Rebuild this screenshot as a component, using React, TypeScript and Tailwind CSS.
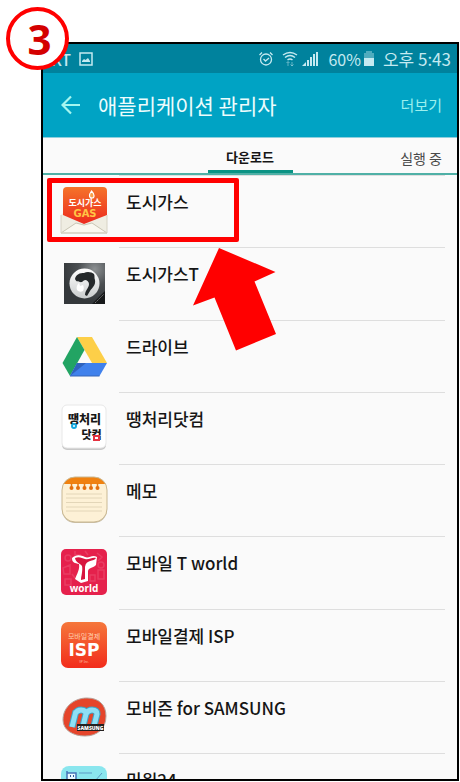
import type { ReactNode } from 'react';

const KR = 'Noto Sans CJK KR, sans-serif';

function GasIcon() {
  return (
    <svg viewBox="0 0 48 48" className="size-12" aria-hidden="true">
      <defs>
        <linearGradient id="gas" x1="0" y1="0" x2="0" y2="1">
          <stop offset="0" stopColor="#f5732a" />
          <stop offset="1" stopColor="#ec2a1e" />
        </linearGradient>
      </defs>
      <path d="M1 28l2-2h42l2 2v18H1z" fill="#efede2" />
      <path d="M1 46l15-10 8 2 8-2 15 10z" fill="#faf8f0" stroke="#c9c5b4" strokeWidth="1" />
      <path d="M3 4q0-4 4-4h36q4 0 4 4v24L24 37 3 28z" fill="url(#gas)" />
      <path d="M1 28v18h46V28" fill="none" stroke="#d6d2c4" strokeWidth="1" />
      <path d="M31.500 4c3 3 3.500 7 .5 7s-3.500-3-.5-7z" fill="#f8a04a" stroke="#fff" strokeWidth="1.200" />
      <text x="25" y="19" textAnchor="middle" fontFamily={KR} fontSize="9" fontWeight="700" fill="#fff">도시가스</text>
      <text x="25" y="30" textAnchor="middle" fontFamily="DejaVu Sans, sans-serif" fontSize="10" fontWeight="700" fill="#ffc545">GAS</text>
    </svg>
  );
}

function HorseIcon() {
  return (
    <svg viewBox="0 0 48 48" className="size-12" aria-hidden="true">
      <defs>
        <radialGradient id="slate" cx=".75" cy=".15" r=".8">
          <stop offset="0" stopColor="#8d9193" />
          <stop offset=".5" stopColor="#4b4f52" />
          <stop offset="1" stopColor="#34383b" />
        </radialGradient>
        <linearGradient id="silver" x1="0" y1="0" x2="0" y2="1">
          <stop offset="0" stopColor="#fff" />
          <stop offset="1" stopColor="#c9cccd" />
        </linearGradient>
      </defs>
      <rect x="4" y="4" width="41" height="41" fill="url(#slate)" />
      <path d="M45 32v13H32z" fill="#17191a" />
      <path d="M35 44l9-9" stroke="#777" strokeWidth="1" strokeDasharray="2 1" />
      <circle cx="24.500" cy="24.500" r="15" fill="url(#silver)" />
      <path d="M15 20c1-5 5-6 9-6 3-2 8-1 10 1 1 2 0 4 1 6 1 5-3 8-5 11l-3 5-2-1c0-5 4-7 4-11 0-2-2-4-4-4l-2 1c-1 2-4 1-5 0-1 1-2 0-3-2z" fill="#25292b" />
      <path d="M17 31c-1-3 0-5 2-7l1 3 3-1c1 2 1 4 0 6-2 1-4 1-6-1z" fill="#fff" />
    </svg>
  );
}

function DriveIcon() {
  return (
    <svg viewBox="0 0 48 48" className="size-12" aria-hidden="true">
      <path d="M17 5h15l15 26H32z" fill="#fdcf48" />
      <path d="M17 5l7.500 13L10 44 2.500 31z" fill="#22a463" />
      <path d="M17 31h30l-7.500 13H10z" fill="#4081ec" />
      <path d="M17 31h9L10 44z" fill="#2f63bd" />
      <path d="M10 44h29.500" stroke="#3565b8" strokeWidth="1" />
    </svg>
  );
}

function TtaengIcon() {
  return (
    <svg viewBox="0 0 48 48" className="size-12" aria-hidden="true">
      <rect x="2" y="2" width="44" height="44" rx="5" fill="#c8c8c8" />
      <rect x="2" y="1" width="44" height="43" rx="5" fill="#fff" stroke="#e8e8e8" strokeWidth="1" />
      <text x="24.500" y="20" textAnchor="middle" fontFamily={KR} fontSize="12" fontWeight="900" fill="#171717">땡처리</text>
      <text x="31.500" y="35" textAnchor="middle" fontFamily={KR} fontSize="11" fontWeight="900" fill="#171717">닷컴</text>
      <circle cx="14" cy="22" r="2" fill="#fff" stroke="#13a7df" strokeWidth="2" />
      <rect x="34" y="32" width="5" height="4" fill="#fff" stroke="#e53340" strokeWidth="2" />
    </svg>
  );
}

function MemoIcon() {
  return (
    <svg viewBox="0 0 48 48" className="size-12" aria-hidden="true">
      <defs>
        <clipPath id="pad"><rect x="2" y="1" width="45" height="45" rx="13" /></clipPath>
      </defs>
      <rect x="2" y="2" width="45" height="45" rx="13" fill="#c9bfa9" />
      <g clipPath="url(#pad)">
        <path d="M0 0h48v48H0z" fill="#fdf1d6" />
        <path d="M0 0h48v8H0z" fill="#f0810f" />
      </g>
      <rect x="2" y="1" width="45" height="45" rx="13" fill="none" stroke="#c9b892" strokeWidth="1" />
      <path d="M6 18h36M6 22h36M6 26.500h36M6 31h36M6 35h36" stroke="#e3d6b8" strokeWidth="1" />
      <path d="M11.500 7v5M18 7v5M24.500 7v5M31 7v5M37.500 7v5" stroke="#e87a10" strokeWidth="1.500" />
      <g fill="#e36f0c">
        <circle cx="11.500" cy="12" r="2" /><circle cx="18" cy="12" r="2" /><circle cx="24.500" cy="12" r="2" />
        <circle cx="31" cy="12" r="2" /><circle cx="37.500" cy="12" r="2" />
      </g>
    </svg>
  );
}

function TWorldIcon() {
  return (
    <svg viewBox="0 0 48 48" className="size-12" aria-hidden="true">
      <rect x="1" y="1" width="46" height="46" rx="5" fill="#e5214c" />
      <g fill="none" stroke="#e93c62" strokeWidth="1.500">
        <circle cx="8" cy="10" r="3" /><path d="M3 20l7-3v9H4zM37 5l5 4-4 4M5 31h6v6H5zM38 22h6v9h-6zM30 27h5v6h-5z" />
        <circle cx="41" cy="17" r="3" /><path d="M15 3v4h6M25 3l3 4M12 26l3 4" />
      </g>
      <path d="M12 10c4-4 9-3 13-1 4 2 7-3 12 0l-1 8c-4 4-7 2-8 6v10l-7 2-6-4c2-5 5-10 4-15-4-1-7-1-7-6z" fill="#fff" />
      <path d="M15 10c4-2 7 0 10 1 4 1 7-2 11-1-2 4-10 1-11 9v12l-4 1c0-4 2-9 1-14-2-3-6-3-7-8z" fill="#d7153f" />
      <text x="24" y="44" textAnchor="middle" fontFamily="Noto Sans, sans-serif" fontSize="10" fontWeight="700" fill="#fff">world</text>
    </svg>
  );
}

function IspIcon() {
  return (
    <svg viewBox="0 0 48 48" className="size-12" aria-hidden="true">
      <defs>
        <linearGradient id="isp" x1="0" y1="0" x2="0" y2="1">
          <stop offset="0" stopColor="#f5773b" />
          <stop offset="1" stopColor="#f22c1b" />
        </linearGradient>
      </defs>
      <rect x="1" y="1" width="46" height="46" rx="7" fill="url(#isp)" />
      <text x="24" y="18" textAnchor="middle" fontFamily={KR} fontSize="7" fill="#ffd0ae">모바일결제</text>
      <text x="24" y="35" textAnchor="middle" fontFamily="DejaVu Sans, sans-serif" fontSize="17" fontWeight="700" fill="#fff">ISP</text>
      <text x="24" y="42" textAnchor="middle" fontFamily="Noto Sans, sans-serif" fontSize="3" fill="#ffc3b0">VP Inc.</text>
    </svg>
  );
}

function MobizenIcon() {
  return (
    <svg viewBox="0 0 48 48" className="size-12" aria-hidden="true">
      <path d="M3 27C3 13 15 5 27 5s19 7 19 18c0 13-9 20-21 20S3 37 3 27z" fill="#e5452b" stroke="#b7a49d" strokeWidth="1" />
      <g fill="none" strokeWidth="7" stroke="#3ba4c8">
        <path d="M12 34l4-16M23 33l3-12q0-4-5-4-4 0-6 4M34 33l3-12q0-4-5-4-4 0-6 4" />
      </g>
      <g fill="none" strokeWidth="5" stroke="#8edff5">
        <path d="M12 34l4-16M23 33l3-12q0-4-5-4-4 0-6 4M34 33l3-12q0-4-5-4-4 0-6 4" />
      </g>
      <rect x="17" y="31" width="27" height="7" fill="#242020" />
      <text x="30.500" y="36.500" textAnchor="middle" fontFamily="Noto Sans, sans-serif" fontSize="5" fontWeight="900" fill="#fff">SAMSUNG</text>
    </svg>
  );
}

function MinwonIcon() {
  return (
    <svg viewBox="0 0 48 48" className="size-12" aria-hidden="true">
      <rect x="1" y="1" width="46" height="46" rx="8" fill="#8ae6ee" />
      <path d="M7 6v12M7 8h9v7H7" fill="#e6f8ff" stroke="#4775b8" strokeWidth="1.500" />
      <path d="M19 8h13M19 16h16l7-8" fill="none" stroke="#5c9bc6" strokeWidth="1" />
      <path d="M10 11h1M13 11h1" stroke="#315f9e" strokeWidth="2" />
    </svg>
  );
}

const apps: { name: string; icon: ReactNode }[] = [
  { name: '도시가스', icon: <GasIcon /> },
  { name: '도시가스T', icon: <HorseIcon /> },
  { name: '드라이브', icon: <DriveIcon /> },
  { name: '땡처리닷컴', icon: <TtaengIcon /> },
  { name: '메모', icon: <MemoIcon /> },
  { name: '모바일 T world', icon: <TWorldIcon /> },
  { name: '모바일결제 ISP', icon: <IspIcon /> },
  { name: '모비즌 for SAMSUNG', icon: <MobizenIcon /> },
];

function AppRow({ name, icon }: { name: string; icon: ReactNode }) {
  return (
    <li className="pr-3">
      <button type="button" className="flex h-full w-full text-left">
        <span className="w-[76px] shrink-0 pt-3 pl-[17px]">{icon}</span>
        <span className="h-full flex-1 border-t border-[#dedede] pt-3 pl-[7px] text-[17px] leading-7 font-medium">{name}</span>
      </button>
    </li>
  );
}

function StatusBar() {
  return (
    <div className="flex h-[29px] items-center bg-[#00829d] pr-1.5 pl-2 text-[17px] leading-7 text-[#c5eaf1]">
      <span className="w-7 shrink-0 text-[16px] font-medium">KT</span>
      <svg viewBox="0 0 14 14" className="size-3.5 shrink-0" fill="none" stroke="currentColor" aria-hidden="true">
        <rect x="1" y="1" width="12" height="12" strokeWidth="1.500" />
        <path d="M3 10V9l2-2 1.500 1L9 6l2 3v1z" fill="currentColor" stroke="none" />
      </svg>
      <div className="ml-auto flex items-center">
        <svg viewBox="0 0 16 16" className="mr-2 size-4" fill="none" stroke="currentColor" strokeWidth="1.300" aria-hidden="true">
          <circle cx="8" cy="8.500" r="5.500" /><path d="M1.500 4L4 1.500M12 1.500L14.500 4M5.500 8l2 2 3.500-3" />
        </svg>
        <svg viewBox="0 0 16 16" className="mr-1 size-4" fill="none" stroke="currentColor" strokeWidth="1.500" aria-hidden="true">
          <path d="M1 4q7-5 14 0M3 6.500q5-4 10 0M5.500 9q2.500-2 5 0" />
          <path d="M6 15v-4M4.500 12L6 10.500 7.500 12M10 11v4M8.500 13.500L10 15l1.500-1.500" strokeWidth="1" opacity=".5" />
        </svg>
        <svg viewBox="0 0 16 16" className="mr-2.5 size-4" fill="currentColor" aria-hidden="true">
          <path d="M0 15l4-4v4zM5 9h2v6H5zM8 6h2v9H8zM11 3h2v12h-2zM14 1h2v14h-2z" />
        </svg>
        <span className="mr-0.5 text-[16px]">60%</span>
        <svg viewBox="0 0 12 16" className="mr-2 h-4 w-3" fill="currentColor" aria-hidden="true">
          <path d="M3 0h6v2h2v5H1V2h2z" opacity=".4" /><path d="M1 7h10v8H1z" />
        </svg>
        <span>오후 5:43</span>
      </div>
    </div>
  );
}

export default function App() {
  return (
    <main className="relative min-h-screen bg-white pt-[42px] pr-px pl-[41px] font-['Noto_Sans_CJK_KR',sans-serif] text-[#151515]">
      <section className="overflow-hidden border-2 border-black bg-[#fafafa]">
        <StatusBar />
        <header className="flex h-16 items-center bg-[#00a3c4] pr-[15px] pl-[18px]">
          <button type="button" aria-label="뒤로" className="mr-[17px] text-[#a5f6f0]">
            <svg viewBox="0 0 20 20" className="size-5" fill="none" stroke="currentColor" strokeWidth="2.200" aria-hidden="true">
              <path d="M19 10H2M10 1.500L1.500 10l8.500 8.500" />
            </svg>
          </button>
          <h1 className="text-[21px] leading-7 text-[#edfcfd]">애플리케이션 관리자</h1>
          <button type="button" className="ml-auto text-[15px] leading-7 text-[#9cf0ee]">더보기</button>
        </header>
        <nav className="grid h-[38px] grid-cols-3 border-t border-b-2 border-t-[#8fcfdd] border-b-[#4fb0a6]">
          <button type="button" className="col-start-2 mx-auto flex h-[35px] w-[85px] items-center justify-center border-b-3 border-[#0b9384] pt-1.5 text-[13px] leading-5 font-bold">다운로드</button>
          <button type="button" className="pt-1 pr-[15px] text-right text-[14px] leading-5 text-[#4a4a4a]">실행 중</button>
        </nav>
        <ul className="grid h-[578px] grid-rows-8">
          {apps.map((app) => <AppRow key={app.name} {...app} />)}
        </ul>
        <ul className="grid h-[26px] overflow-hidden">
          <AppRow name="민원24" icon={<MinwonIcon />} />
        </ul>
      </section>

      <div className="absolute top-[178px] left-[47px] h-16 w-48 rounded-xs border-5 border-[#ff0000]" />
      <svg viewBox="0 0 84 104" className="absolute top-[247px] left-[193px] h-[104px] w-[84px]" fill="#ff0000" aria-hidden="true">
        <path d="M26 1L82.500 25 61.500 34.500 83 87 43 103.500 21.500 50.500 0 58.500z" />
      </svg>
      <div className="absolute top-[7px] left-[6px] flex size-[63px] items-center justify-center rounded-full border-4 border-[#ff0000] bg-white pl-1 font-['Open_Sans',sans-serif] text-[42px] leading-10 font-bold text-[#d40000]">3</div>
    </main>
  );
}
